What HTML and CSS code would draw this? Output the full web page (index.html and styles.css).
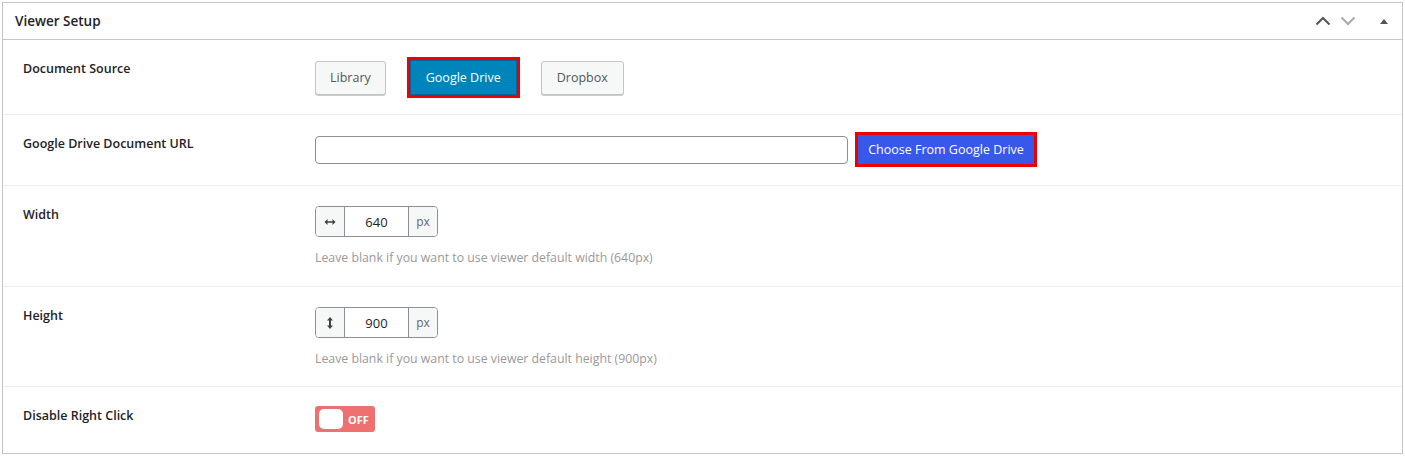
FILE: index.html
```html
<!DOCTYPE html>
<html lang="en">
<head>
    <meta charset="UTF-8">
    <title>Viewer Setup</title>
    <link rel="stylesheet" href="styles.css">
</head>
<body>
<div class="postbox">
    <div class="postbox-header">
        <h2>Viewer Setup</h2>
        <div class="handle-actions">
            <svg width="16" height="10" viewBox="0 0 16 10"><path d="M1.5 8.5 L8 2 L14.5 8.5" fill="none" stroke="#50575e" stroke-width="2"/></svg>
            <svg width="16" height="10" viewBox="0 0 16 10" class="dim"><path d="M1.5 1.5 L8 8 L14.5 1.5" fill="none" stroke="#a7aaad" stroke-width="2"/></svg>
            <svg width="10" height="6" viewBox="0 0 10 6" class="toggle"><path d="M1 6 L5 1 L9 6 Z" fill="#50575e"/></svg>
        </div>
    </div>
    <div class="field source">
        <label>Document Source</label>
        <div class="control">
            <div class="sources">
                <button class="btn">Library</button>
                <button class="btn active">Google Drive</button>
                <button class="btn wide">Dropbox</button>
            </div>
        </div>
    </div>
    <div class="field url-field">
        <label>Google Drive Document URL</label>
        <div class="control url-row">
            <input class="url" type="text">
            <button class="btn-primary">Choose From Google Drive</button>
        </div>
    </div>
    <div class="field">
        <label>Width</label>
        <div class="control">
            <div class="unit-group">
                <span class="addon icon"><svg width="12" height="8" viewBox="0 0 12 8"><path d="M0.5 4 L3.5 1 V3.2 H8.5 V1 L11.5 4 L8.5 7 V4.8 H3.5 V7 Z" fill="#3c434a"/></svg></span>
                <input class="num" value="640">
                <span class="addon">px</span>
            </div>
            <p class="help">Leave blank if you want to use viewer default width (640px)</p>
        </div>
    </div>
    <div class="field height-field">
        <label>Height</label>
        <div class="control">
            <div class="unit-group">
                <span class="addon icon"><svg width="8" height="14" viewBox="0 0 8 14"><path d="M4 1 L7 4.5 H5 V9.5 H7 L4 13 L1 9.5 H3 V4.5 H1 Z" fill="#3c434a"/></svg></span>
                <input class="num" value="900">
                <span class="addon">px</span>
            </div>
            <p class="help">Leave blank if you want to use viewer default height (900px)</p>
        </div>
    </div>
    <div class="field last">
        <label>Disable Right Click</label>
        <div class="control">
            <span class="switch"><span class="knob"></span>OFF</span>
        </div>
    </div>
</div>
</body>
</html>
```

FILE: styles.css
```css
* {
    box-sizing: border-box;
}
body {
    font-family: "Open Sans", "Noto Sans", sans-serif;
    font-size: 12.5px;
    color: #1d2327;
    margin: 0;
    padding: 2px 2px 0 2px;
    background: #fff;
}
.postbox {
    border: 1px solid #c3c4c7;
    background: #fff;
    width: 1401px;
}
.postbox-header {
    display: flex;
    align-items: center;
    justify-content: space-between;
    height: 37px;
    border-bottom: 1px solid #c3c4c7;
    padding: 0 0 0 12px;
}
.postbox-header h2 {
    font-size: 13.5px;
    font-weight: 600;
    margin: 0;
    color: #1d2327;
}
.handle-actions {
    display: flex;
    align-items: center;
    gap: 9px;
    padding-right: 13px;
}
.handle-actions .toggle {
    margin-left: 14px;
    margin-bottom: 1px;
}
.field {
    display: flex;
    align-items: flex-start;
    border-bottom: 1px solid #eeeeee;
    height: 101px;
    padding: 19px 0 0 20px;
}
.field.source {
    height: 75px;
}
.field.url-field {
    height: 71px;
}
.field.height-field {
    height: 100px;
}
.field.last {
    border-bottom: none;
    height: 66px;
}
.field label {
    width: 292px;
    font-weight: 600;
    line-height: 20px;
}
.sources {
    display: flex;
    align-items: center;
    gap: 21px;
    margin-top: 1px;
}
.btn {
    font-family: inherit;
    font-size: 12.5px;
    color: #50575e;
    background: #f6f7f7;
    border: 1px solid #c3c4c7;
    border-radius: 3px;
    height: 34px;
    padding: 0 14px;
    box-shadow: 0 1px 0 #ccc;
}
.btn.wide {
    padding: 0 15px;
}
.btn.active {
    background: #0085ba;
    border: 1px solid #006799;
    border-radius: 0;
    color: #fff;
    height: 35px;
    padding: 0 15px;
    outline: 3px solid #ee0000;
    outline-offset: 0;
    margin: 0 3px;
    box-shadow: none;
}
.url-row {
    display: flex;
    align-items: center;
    gap: 10px;
    margin-top: 1px;
}
.url {
    width: 533px;
    height: 28px;
    border: 1px solid #8c8f94;
    border-radius: 4px;
}
.btn-primary {
    font-family: inherit;
    font-size: 12.5px;
    color: #fff;
    background: #3858e9;
    border: none;
    height: 29px;
    width: 176px;
    padding: 0;
    white-space: nowrap;
    outline: 3px solid #ee0000;
}
.unit-group {
    display: flex;
    width: 123px;
    height: 31px;
    border: 1px solid #8c8f94;
    border-radius: 4px;
    overflow: hidden;
    margin-top: 1px;
}
.addon {
    display: flex;
    align-items: center;
    justify-content: center;
    width: 29px;
    background: #f6f7f7;
    color: #646970;
    font-size: 12px;
}
.addon.icon {
    border-right: 1px solid #8c8f94;
}
.unit-group .addon:last-child {
    border-left: 1px solid #8c8f94;
}
.num {
    width: 63px;
    border: none;
    text-align: center;
    font-family: inherit;
    font-size: 13px;
    color: #1d2327;
    padding: 0;
}
.help {
    margin: 12px 0 0;
    color: #999;
    font-size: 12.3px;
}
.switch {
    display: flex;
    align-items: center;
    gap: 5px;
    width: 60px;
    height: 26px;
    border-radius: 3px;
    background: #ef7070;
    color: #fff;
    font-weight: 700;
    font-size: 11px;
    padding-left: 4px;
}
.knob {
    width: 24px;
    height: 20px;
    background: #fff;
    border-radius: 5px;
}
```
